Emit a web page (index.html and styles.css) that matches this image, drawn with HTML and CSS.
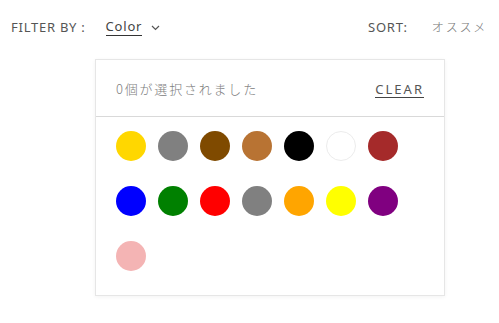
FILE: index.html
```html
<!DOCTYPE html>
<html lang="ja">
<head>
<meta charset="utf-8">
<link rel="stylesheet" href="styles.css">
</head>
<body>
<div class="toolbar">
  <div class="filter">
    <span class="label">FILTER BY :</span>
    <span class="select"><span class="current">Color</span>
      <svg class="chev" width="9" height="6" viewBox="0 0 9 6"><path d="M1 1l3.5 3.5L8 1" fill="none" stroke="#555" stroke-width="1.2"/></svg>
    </span>
  </div>
  <div class="sort">
    <span class="label">SORT:</span>
    <span class="sort-value">オススメ</span>
  </div>
</div>
<div class="panel">
  <div class="panel-head">
    <span class="count">0個が選択されました</span>
    <span class="clear">CLEAR</span>
  </div>
  <div class="swatches">
    <span class="sw" style="background:#ffd700"></span>
    <span class="sw" style="background:#808080"></span>
    <span class="sw" style="background:#7f4a00"></span>
    <span class="sw" style="background:#b87333"></span>
    <span class="sw" style="background:#000000"></span>
    <span class="sw white" style="background:#ffffff"></span>
    <span class="sw" style="background:#a52a2a"></span>
    <span class="sw" style="background:#0000ff"></span>
    <span class="sw" style="background:#008000"></span>
    <span class="sw" style="background:#ff0000"></span>
    <span class="sw" style="background:#808080"></span>
    <span class="sw" style="background:#ffa500"></span>
    <span class="sw" style="background:#ffff00"></span>
    <span class="sw" style="background:#800080"></span>
    <span class="sw" style="background:#f4b4b4"></span>
  </div>
</div>
</body>
</html>
```

FILE: styles.css
```css
html, body {
  margin: 0;
  background: #fff;
  overflow: hidden;
}
body {
  width: 499px;
  height: 323px;
  font-family: "Noto Sans", "Noto Sans CJK JP", sans-serif;
  color: #555;
}
.toolbar {
  display: flex;
  justify-content: space-between;
  height: 59px;
  padding-left: 11px;
  box-sizing: border-box;
  white-space: nowrap;
}
.filter, .sort {
  display: flex;
  align-items: flex-start;
  padding-top: 18px;
  font-size: 13px;
  line-height: 18px;
  letter-spacing: 0.75px;
}
.filter .label {
  margin-right: 20px;
}
.select {
  display: flex;
  align-items: center;
  gap: 9px;
}
.current {
  color: #444;
  border-bottom: 1px solid #333;
  line-height: 17px;
  letter-spacing: 0.8px;
}
.chev { margin-top: 1px; }
.sort {
  width: 131px;
  overflow: hidden;
}
.sort .label { margin-right: 24px; }
.sort-value {
  font-family: "Noto Sans CJK JP", sans-serif;
  font-size: 12px;
  font-weight: 300;
  letter-spacing: 1.8px;
  color: #777;
}
.panel {
  margin-left: 95px;
  width: 350px;
  height: 237px;
  box-sizing: border-box;
  border: 1px solid #e6e6e6;
  box-shadow: 0 1px 4px rgba(0,0,0,0.05);
}
.panel-head {
  display: flex;
  justify-content: space-between;
  align-items: center;
  height: 56px;
  padding: 0 20px;
  border-bottom: 1px solid #d9d9d9;
  font-size: 13px;
}
.count {
  font-family: "Noto Sans CJK JP", sans-serif;
  font-weight: 300;
  color: #808080;
  letter-spacing: 1.8px;
  margin-top: 1px;
}
.clear {
  color: #555;
  letter-spacing: 2px;
  border-bottom: 1px solid #444;
  line-height: 15px;
  margin-top: 3px;
}
.swatches {
  display: grid;
  grid-template-columns: repeat(7, 30px);
  column-gap: 12px;
  row-gap: 25px;
  padding: 14px 20px 0;
}
.sw {
  width: 30px;
  height: 30px;
  border-radius: 50%;
  box-sizing: border-box;
}
.sw.white { border: 1px solid #ececec; }
```
